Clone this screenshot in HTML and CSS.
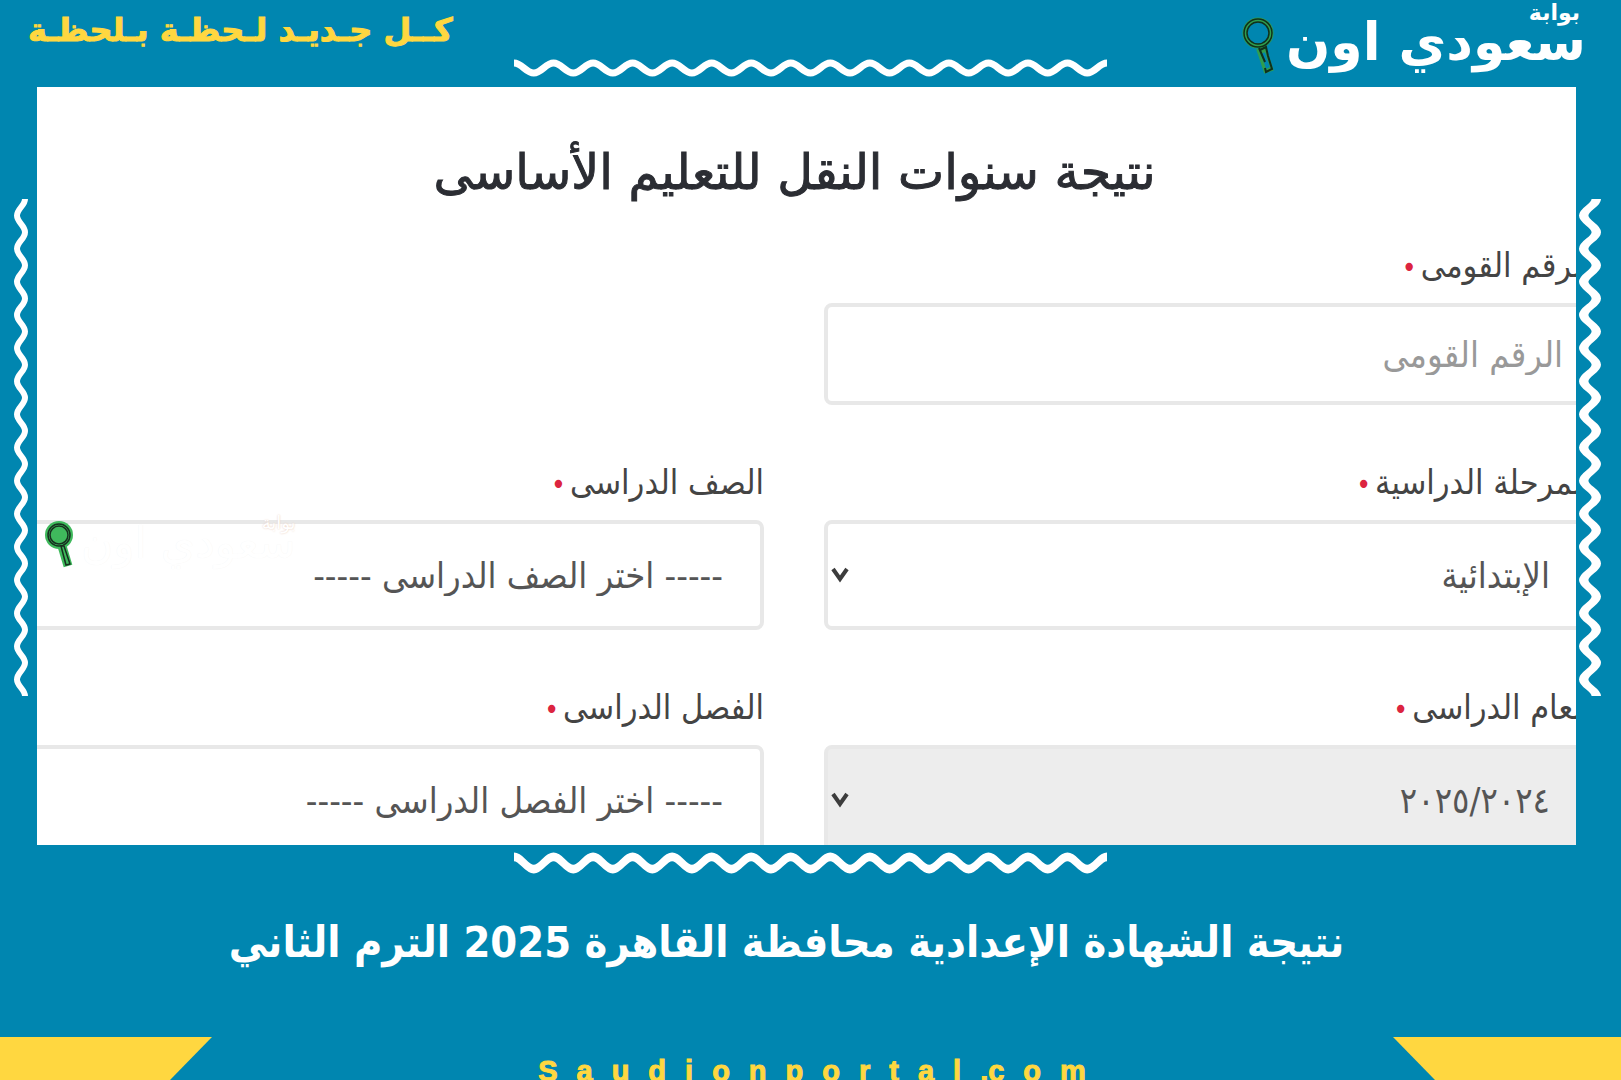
FILE: index.html
```html
<!DOCTYPE html>
<html lang="ar" dir="rtl">
<head>
<meta charset="utf-8">
<meta name="viewport" content="width=device-width, initial-scale=1">
<title>بوابة سعودي اون</title>
<link rel="stylesheet" href="styles.css">
</head>
<body>
<svg class="defs" aria-hidden="true">
  <symbol id="wave-h" viewBox="0 0 600 18" preserveAspectRatio="none">
    <path fill="none" stroke="#fff" stroke-width="7" d="M0 4c8 0 12 10 20 10s12-10 20-10s12 10 20 10s12-10 20-10s12 10 20 10s12-10 20-10s12 10 20 10s12-10 20-10s12 10 20 10s12-10 20-10s12 10 20 10s12-10 20-10s12 10 20 10s12-10 20-10s12 10 20 10s12-10 20-10s12 10 20 10s12-10 20-10s12 10 20 10s12-10 20-10s12 10 20 10s12-10 20-10s12 10 20 10s12-10 20-10s12 10 20 10s12-10 20-10s12 10 20 10s12-10 20-10s12 10 20 10s12-10 20-10"/>
  </symbol>
  <symbol id="wave-v" viewBox="0 0 14 510" preserveAspectRatio="none">
    <path fill="none" stroke="#fff" stroke-width="6" d="M11 0c0 7-8 10-8 17s8 10 8 17s-8 10-8 17s8 10 8 17s-8 10-8 17s8 10 8 17s-8 10-8 17s8 10 8 17s-8 10-8 17s8 10 8 17s-8 10-8 17s8 10 8 17s-8 10-8 17s8 10 8 17s-8 10-8 17s8 10 8 17s-8 10-8 17s8 10 8 17s-8 10-8 17s8 10 8 17s-8 10-8 17s8 10 8 17s-8 10-8 17s8 10 8 17s-8 10-8 17s8 10 8 17s-8 10-8 17s8 10 8 17s-8 10-8 17s8 10 8 17"/>
  </symbol>
  <symbol id="chevron" viewBox="0 0 18 16">
    <path fill="none" stroke="#3c3c3c" stroke-width="4" d="M2 2l7 10 7-10"/>
  </symbol>
</svg>

<header class="top">
  <a class="logo" href="#">
    <span class="logo-text"><small class="logo-small">بوابة</small><strong class="logo-name">سعودي اون</strong></span>
    <svg class="logo-icon" viewBox="0 0 34 58" aria-hidden="true">
      <circle cx="16" cy="16" r="13" fill="none" stroke="#2f9e4f" stroke-width="5"/>
      <path d="M19 31l8 24" stroke="#2f9e4f" stroke-width="10"/>
      <path d="M21 36l5 15" stroke="#0086b0" stroke-width="4"/>
      <circle cx="16" cy="16" r="14" fill="none" stroke="#10301c" stroke-width="1.5"/>
      <circle cx="16" cy="16" r="11" fill="none" stroke="#10301c" stroke-width="1.5"/>
      <path d="M17 31l6 14M18 33l6-3 2 9M26 39l4 13-6 3-1-4" fill="none" stroke="#10301c" stroke-width="2"/>
    </svg>
  </a>
  <svg class="wave wave-top" aria-hidden="true"><use href="#wave-h"/></svg>
  <p class="tagline">كــل جـديـد لـحظـة بـلحظـة</p>
</header>

<main class="middle">
  <svg class="side side-right" aria-hidden="true"><use href="#wave-v"/></svg>
  <section class="panel">
    <h2 class="panel-title">نتيجة سنوات النقل للتعليم الأساسى</h2>
    <form class="form">
      <div class="field field-first">
        <label class="label" for="nid">الرقم القومى<span class="req">•</span></label>
        <input class="control control-input" id="nid" type="text" placeholder="الرقم القومى">
      </div>
      <div class="field">
        <label class="label" for="stage">المرحلة الدراسية<span class="req">•</span></label>
        <div class="pick">
          <select class="control" id="stage"><option>الإبتدائية</option></select>
          <svg class="chevron" aria-hidden="true"><use href="#chevron"/></svg>
        </div>
      </div>
      <div class="field">
        <label class="label" for="grade">الصف الدراسى<span class="req">•</span></label>
        <select class="control" id="grade"><option>----- اختر الصف الدراسى -----</option></select>
      </div>
      <div class="field">
        <label class="label" for="year">العام الدراسى<span class="req">•</span></label>
        <div class="pick">
          <select class="control control-grey" id="year"><option>٢٠٢٥/٢٠٢٤</option></select>
          <svg class="chevron" aria-hidden="true"><use href="#chevron"/></svg>
        </div>
      </div>
      <div class="field">
        <label class="label" for="term">الفصل الدراسى<span class="req">•</span></label>
        <select class="control" id="term"><option>----- اختر الفصل الدراسى -----</option></select>
      </div>
    </form>
    <div class="watermark" aria-hidden="true">
      <span class="mark-text"><small class="mark-small">بوابة</small><span class="mark-name">سعودي اون</span></span>
      <svg class="mark-icon" viewBox="0 0 28 48">
        <path d="M17 25l6 20" stroke="#3fb95c" stroke-width="9"/>
        <circle cx="14" cy="14" r="14" fill="#3fb95c"/>
        <g fill="none" stroke="#17301f" stroke-width="1.5">
          <circle cx="14" cy="14" r="11"/><circle cx="14" cy="14" r="9"/>
          <path d="M16 25l5 19 4-1-6-18z"/>
        </g>
      </svg>
    </div>
  </section>
  <svg class="side side-left" aria-hidden="true"><use href="#wave-v"/></svg>
</main>

<section class="caption">
  <svg class="wave wave-bottom" aria-hidden="true"><use href="#wave-h"/></svg>
  <h1 class="headline">نتيجة الشهادة الإعدادية محافظة القاهرة 2025 الترم الثاني</h1>
</section>

<footer class="foot">
  <span class="corner corner-right"></span>
  <a class="site" href="#" dir="ltr">Saudionportal<span class="dot">.</span>com</a>
  <span class="corner corner-left"></span>
</footer>
</body>
</html>
```
FILE: styles.css
```css
* { box-sizing: border-box; }

body {
  display: flex;
  flex-direction: column;
  height: 100vh;
  margin: 0;
  overflow: hidden;
  background: #0086b0;
  color: #fff;
  font-family: "DejaVu Sans", sans-serif;
}

h1, h2, p { margin: 0; }
a { color: inherit; text-decoration: none; }
.defs { position: absolute; width: 0; height: 0; }

.top {
  display: grid;
  grid-template-columns: 1fr auto 1fr;
  height: 87px;
  flex: none;
}
.wave { display: block; width: 593px; }
.wave-top { height: 18px; align-self: end; margin-bottom: 10px; }
.wave-bottom { height: 22px; }

.logo {
  display: flex;
  gap: 10px;
  padding-right: 35px;
  align-items: flex-start;
}
.logo-text { position: relative; padding-top: 6px; white-space: nowrap; }
.logo-name { font-size: 52px; line-height: 72px; }
.logo-small {
  position: absolute;
  top: 0;
  right: 6px;
  font-size: 22px;
  line-height: 26px;
  font-weight: bold;
}
.logo-icon { width: 34px; height: 58px; margin-top: 17px; flex: none; }

.tagline {
  padding-left: 28px;
  color: #ffd740;
  font-size: 32px;
  line-height: 60px;
  font-weight: bold;
  text-align: left;
  white-space: nowrap;
  -webkit-text-stroke: 1px #ffd740;
}

.middle {
  display: grid;
  grid-template-columns: 45px minmax(0, 1fr) 37px;
  flex: 1;
  min-height: 0;
}
.side { height: 497px; margin-top: 112px; }
.side-right { width: 22px; margin-right: 20px; }
.side-left { width: 14px; margin-right: 9px; }

.panel {
  position: relative;
  overflow: hidden;
  padding-top: 46px;
  background: #fff;
  color: #333;
}
.panel-title {
  margin-bottom: 28px;
  padding-right: 24px;
  color: #2b2d33;
  font-size: 49px;
  line-height: 80px;
  font-weight: normal;
  text-align: center;
  white-space: nowrap;
  -webkit-text-stroke: 1px #2b2d33;
}
.form {
  display: grid;
  grid-template-columns: 1fr 1fr;
  gap: 53px 60px;
  margin: 0 -15px 0 -40px;
}
.field { display: flex; flex-direction: column; gap: 14px; }
.field-first { grid-column: 1; }
.field-first + .field { grid-column: 1; }
.label {
  height: 48px;
  color: #444;
  font-family: "DejaVu Sans Condensed", "DejaVu Sans", sans-serif;
  font-size: 34px;
  line-height: 48px;
  white-space: nowrap;
}
.req { margin-right: 4px; color: #dc2440; font-size: 28px; }
.pick { position: relative; }
.control {
  display: block;
  width: 100%;
  height: 110px;
  padding: 0 37px;
  border: 4px solid #e8e8e8;
  border-radius: 8px;
  background: #fff;
  color: #555;
  font-family: "DejaVu Sans Condensed", "DejaVu Sans", sans-serif;
  font-size: 36px;
  appearance: none;
}
.control-input { height: 102px; padding: 0 24px; }
.control-input::placeholder { color: #999; opacity: 1; }
.control-grey { background: #ededed; }
.chevron { position: absolute; left: 7px; top: 47px; width: 18px; height: 16px; }

.watermark {
  position: absolute;
  left: 8px;
  top: 430px;
  display: flex;
  align-items: flex-end;
  gap: 8px;
}
.mark-text {
  position: relative;
  color: #fff;
  text-shadow: 0 0 1px #f3f3f3;
  white-space: nowrap;
}
.mark-name { font-size: 44px; line-height: 52px; }
.mark-small {
  position: absolute;
  top: -4px;
  right: 0;
  font-size: 18px;
  line-height: 20px;
  text-shadow: 0 0 2px #e8c8b8;
}
.mark-icon { width: 28px; height: 48px; }

.caption {
  display: flex;
  flex-direction: column;
  align-items: center;
  flex: none;
  height: 192px;
  padding-top: 7px;
}
.headline {
  margin-top: 28px;
  padding-right: 48px;
  font-family: "DejaVu Sans Condensed", "DejaVu Sans", sans-serif;
  font-size: 43px;
  line-height: 80px;
  white-space: nowrap;
}

.foot {
  display: flex;
  justify-content: space-between;
  flex: none;
  height: 43px;
}
.corner { height: 43px; background: #ffd740; }
.corner-right { width: 228px; clip-path: polygon(0 0, 100% 0, 100% 100%, 42px 100%); }
.corner-left { width: 212px; clip-path: polygon(0 0, 100% 0, 170px 100%, 0 100%); }
.site {
  padding: 16px 0 0 38px;
  color: #ffd740;
  font-family: "Liberation Sans", Arial, sans-serif;
  font-size: 29px;
  line-height: 36px;
  font-weight: bold;
  letter-spacing: 19px;
  white-space: nowrap;
  -webkit-text-stroke: 1px #ffd740;
}
.dot { letter-spacing: 0; }
```
